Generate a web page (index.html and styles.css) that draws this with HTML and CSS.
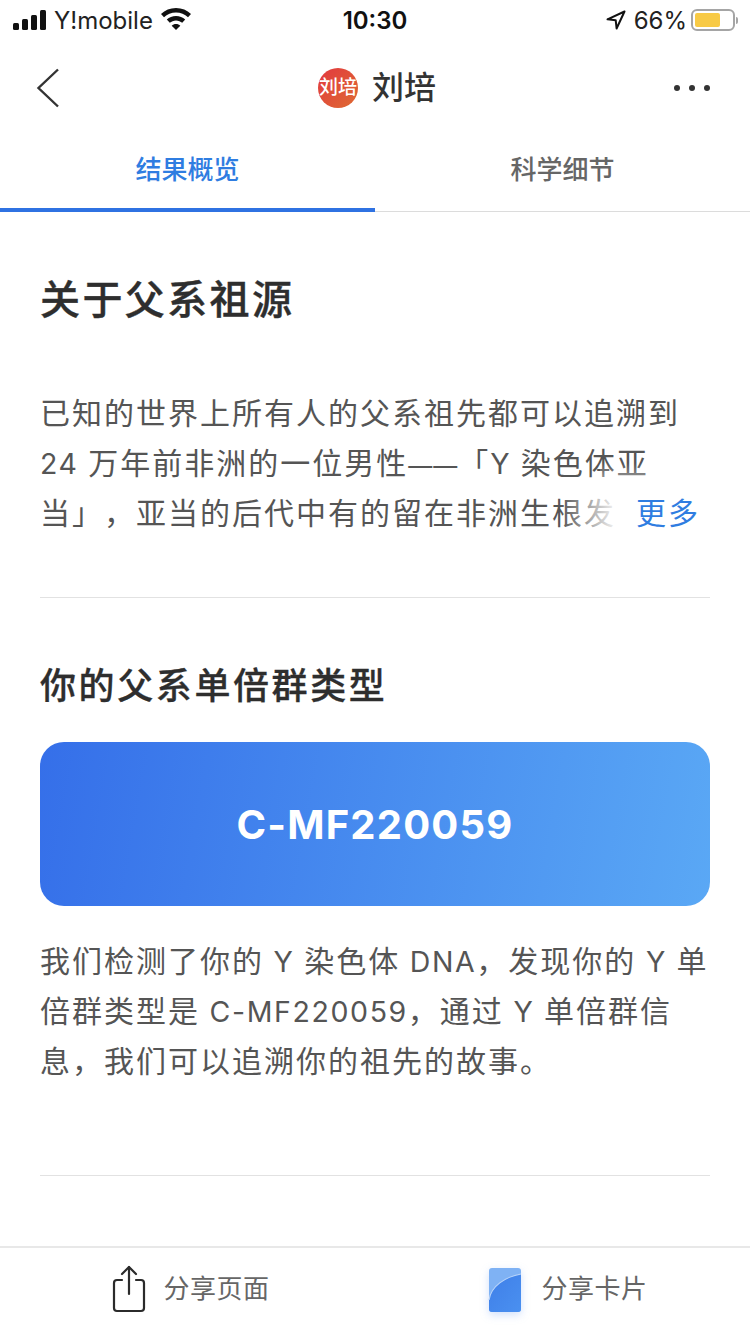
FILE: index.html
```html
<!DOCTYPE html>
<html lang="zh-CN">
<head>
<meta charset="utf-8">
<title>刘培</title>
<link rel="stylesheet" href="styles.css">
</head>
<body>
<div class="page">
  <div class="status">
    <div class="status-side">
      <svg class="signal" width="36" height="20" viewBox="0 0 36 20"><rect x="0" y="13" width="6" height="7" rx="1.5"/><rect x="9" y="9" width="6" height="11" rx="1.5"/><rect x="18" y="5" width="6" height="15" rx="1.5"/><rect x="27" y="0" width="6" height="20" rx="1.5"/></svg>
      <span class="carrier">Y!mobile</span>
      <svg class="wifi" width="30" height="22" viewBox="0 0 30 22"><path d="M15 0C9 0 4 2.300 0 6l3 3.200C6.200 6.200 10.400 4.400 15 4.400s8.800 1.800 12 4.800L30 6C26 2.300 21 0 15 0z"/><path d="M15 8c-3.600 0-6.800 1.400-9.200 3.600l3 3.200C10.400 13.300 12.600 12.400 15 12.400s4.600.9 6.200 2.400l3-3.200C21.800 9.400 18.600 8 15 8z"/><path d="M15 16c-1.700 0-3.200.6-4.300 1.700L15 22l4.300-4.300C18.200 16.600 16.700 16 15 16z"/></svg>
    </div>
    <div class="time">10:30</div>
    <div class="status-side status-right">
      <svg class="loc" width="20" height="20" viewBox="0 0 20 20"><path d="M18.500 1.500 1.500 9.300l8.200.9.900 8.300z" fill="none" stroke="#111" stroke-width="2" stroke-linejoin="round"/></svg>
      <span class="pct">66%</span>
      <div class="battery"><div class="battery-fill"></div></div>
      <div class="battery-cap"></div>
    </div>
  </div>

  <div class="nav">
    <svg class="back" width="24" height="40" viewBox="0 0 24 40"><path d="M22 1.500 2.500 20 22 38.500" fill="none" stroke="#333" stroke-width="2.400"/></svg>
    <div class="nav-title">
      <span class="avatar">刘培</span>
      <span class="name">刘培</span>
    </div>
    <div class="dots"><i></i><i></i><i></i></div>
  </div>

  <div class="tabs">
    <div class="tab tab-active">结果概览</div>
    <div class="tab">科学细节</div>
  </div>

  <main class="content">
    <section class="about">
      <h1 class="title">关于父系祖源</h1>
      <div class="clamp">
        <div class="para">
          <div class="line"><span>已知的世界上所有人的父系祖先都可以追溯到</span></div>
          <div class="line"><span class="latin">24 </span><span>万年前非洲的一位男性</span><span class="dash">——</span><span>「</span><span class="latin">Y </span><span>染色体亚</span></div>
          <div class="line"><span>当」，亚当的后代中有的留在非洲生根发</span></div>
        </div>
        <div class="fade-top"></div>
        <div class="more"><span class="more-label">更多</span></div>
      </div>
    </section>
    <section class="haplo">
      <h2 class="subtitle">你的父系单倍群类型</h2>
      <div class="card">C-MF220059</div>
      <div class="para">
        <div class="line"><span>我们检测了你的</span><span class="latin"> Y </span><span>染色体</span><span class="latin"> DNA</span><span>，发现你的</span><span class="latin"> Y </span><span>单</span></div>
        <div class="line"><span>倍群类型是</span><span class="latin"> C-MF220059</span><span>，通过</span><span class="latin"> Y </span><span>单倍群信</span></div>
        <div class="line"><span>息，我们可以追溯你的祖先的故事。</span></div>
      </div>
    </section>
  </main>

  <div class="bottom">
    <div class="action">
      <svg class="share-icon" width="34" height="48" viewBox="0 0 34 48"><g fill="none" stroke="#2b2b2b" stroke-width="2.200" stroke-linecap="round" stroke-linejoin="round"><path d="M10 15H5a3 3 0 0 0-3 3v25a3 3 0 0 0 3 3h24a3 3 0 0 0 3-3V18a3 3 0 0 0-3-3h-5"/><path d="M17 29V2"/><path d="M10 9l7-7 7 7"/></g></svg>
      <span class="action-label">分享页面</span>
    </div>
    <div class="action">
      <svg class="card-icon" width="44" height="56" viewBox="0 0 44 56"><defs><linearGradient id="g1" x1="0" y1="0" x2="1" y2="1"><stop offset="0" stop-color="#3f7fe8"/><stop offset="1" stop-color="#4a90f0"/></linearGradient></defs><rect x="6" y="4" width="32" height="44" rx="3" fill="#7fb2f4"/><path d="M6 36C8 22 22 13 38 10v35a3 3 0 0 1-3 3H9a3 3 0 0 1-3-3z" fill="url(#g1)"/><path d="M6 36C8 22 22 13 38 10" fill="none" stroke="#b9d5fa" stroke-width="1.200"/></svg>
      <span class="action-label">分享卡片</span>
    </div>
  </div>
</div>
</body>
</html>
```

FILE: styles.css
```css
* { box-sizing: border-box; }
html, body { margin: 0; padding: 0; background: #fff; }
body { font-family: Inter, "Noto Sans CJK SC", sans-serif; color: #333; text-spacing-trim: space-all; }
.page { width: 750px; height: 1334px; display: flex; flex-direction: column; overflow: hidden; }

.status { height: 40px; padding: 0 12px 0 13px; display: flex; align-items: center; justify-content: space-between; position: relative; color: #111; font-size: 24px; }
.status-side { display: flex; align-items: center; }
.signal { fill: #111; margin-right: 5px; margin-top: -1px; }
.carrier { color: #222; }
.wifi { fill: #111; margin-left: 8px; margin-top: -2px; }
.time { position: absolute; left: 0; right: 0; text-align: center; font-weight: 600; font-size: 24px; pointer-events: none; }
.status-right { position: relative; }
.loc { margin-right: 8px; }
.pct { color: #222; margin-right: 4px; font-size: 24px; }
.battery { width: 44px; height: 22px; border: 2px solid #a5a5a5; border-radius: 6px; padding: 2px; }
.battery-fill { width: 25px; height: 14px; background: #f8ca45; border-radius: 2px; }
.battery-cap { width: 2px; height: 7px; background: #a5a5a5; border-radius: 0 2px 2px 0; margin-left: 1px; }

.nav { height: 96px; display: flex; align-items: center; justify-content: center; position: relative; }
.back { position: absolute; left: 36px; top: 28px; }
.nav-title { display: flex; align-items: center; gap: 14px; padding-left: 4px; }
.avatar { width: 40px; height: 40px; border-radius: 50%; background: linear-gradient(135deg, #e2383f, #de6b32); color: #fff; font-size: 19px; font-weight: 500; line-height: 40px; text-align: center; white-space: nowrap; }
.name { font-size: 32px; line-height: 40px; color: #333; font-weight: 500; }
.dots { position: absolute; right: 40px; top: 45px; display: flex; gap: 9px; }
.dots i { width: 6px; height: 6px; border-radius: 50%; background: #333; display: block; }

.tabs { height: 76px; display: flex; border-bottom: 1px solid #dcdcdc; }
.tab { flex: 1; text-align: center; font-size: 26px; line-height: 68px; color: #666; font-weight: 500; }
.tab-active { color: #2f7de1; border-bottom: 4px solid #2f72e2; height: 76px; }

.content { flex: 1; padding: 0 40px; }
.about { padding: 60px 0 59px; border-bottom: 1px solid #e2e2e2; }
.title { margin: 0 0 60px; font-size: 40px; line-height: 56px; letter-spacing: 2.4px; font-weight: 500; color: #2e2e2e; -webkit-text-stroke: 0.4px #2e2e2e; }
.clamp { height: 150px; overflow: hidden; position: relative; }
.para { font-size: 30px; line-height: 50px; letter-spacing: 2px; color: #555; }
.line { height: 50px; white-space: pre; }
.latin { font-size: 28.5px; letter-spacing: 1.6px; line-height: 1; }
.dash { font-size: 24px; letter-spacing: 1px; line-height: 1; }
.fade-top { position: absolute; right: 50px; top: 75px; width: 60px; height: 25px; background: linear-gradient(to bottom, rgba(255,255,255,0), rgba(255,255,255,.6)); }
.more { position: absolute; right: 0; bottom: 0; width: 150px; height: 50px; display: flex; justify-content: flex-end; background: linear-gradient(to right, rgba(255,255,255,0), #fff 40%); }
.more-label { font-size: 30px; line-height: 50px; letter-spacing: 2px; color: #2f7de1; padding-right: 10px; }

.haplo { padding: 63px 0 89px; border-bottom: 1px solid #e2e2e2; }
.subtitle { margin: 0 0 31px; font-size: 36px; line-height: 50px; letter-spacing: 2.6px; font-weight: 500; color: #2e2e2e; -webkit-text-stroke: 0.3px #2e2e2e; }
.card { height: 164px; border-radius: 24px; background: linear-gradient(100deg, #356fe9, #5aa8f5); color: #fff; font-weight: 700; font-size: 40px; letter-spacing: 1.2px; display: flex; align-items: center; justify-content: center; margin-bottom: 30px; }

.bottom { height: 88px; border-top: 2px solid #e8e8e8; margin-top: -1px; padding-bottom: 10px; display: flex; }
.action { flex: 1; display: flex; align-items: center; justify-content: center; gap: 20px; padding-left: 4px; }
.action-label { font-size: 26px; letter-spacing: .5px; color: #666; }
.share-icon { margin: 6px -3px 0 3px; }
.card-icon { filter: drop-shadow(0 3px 4px rgba(70,130,240,.25)); margin: 12px -6px 0 2px; }
```
